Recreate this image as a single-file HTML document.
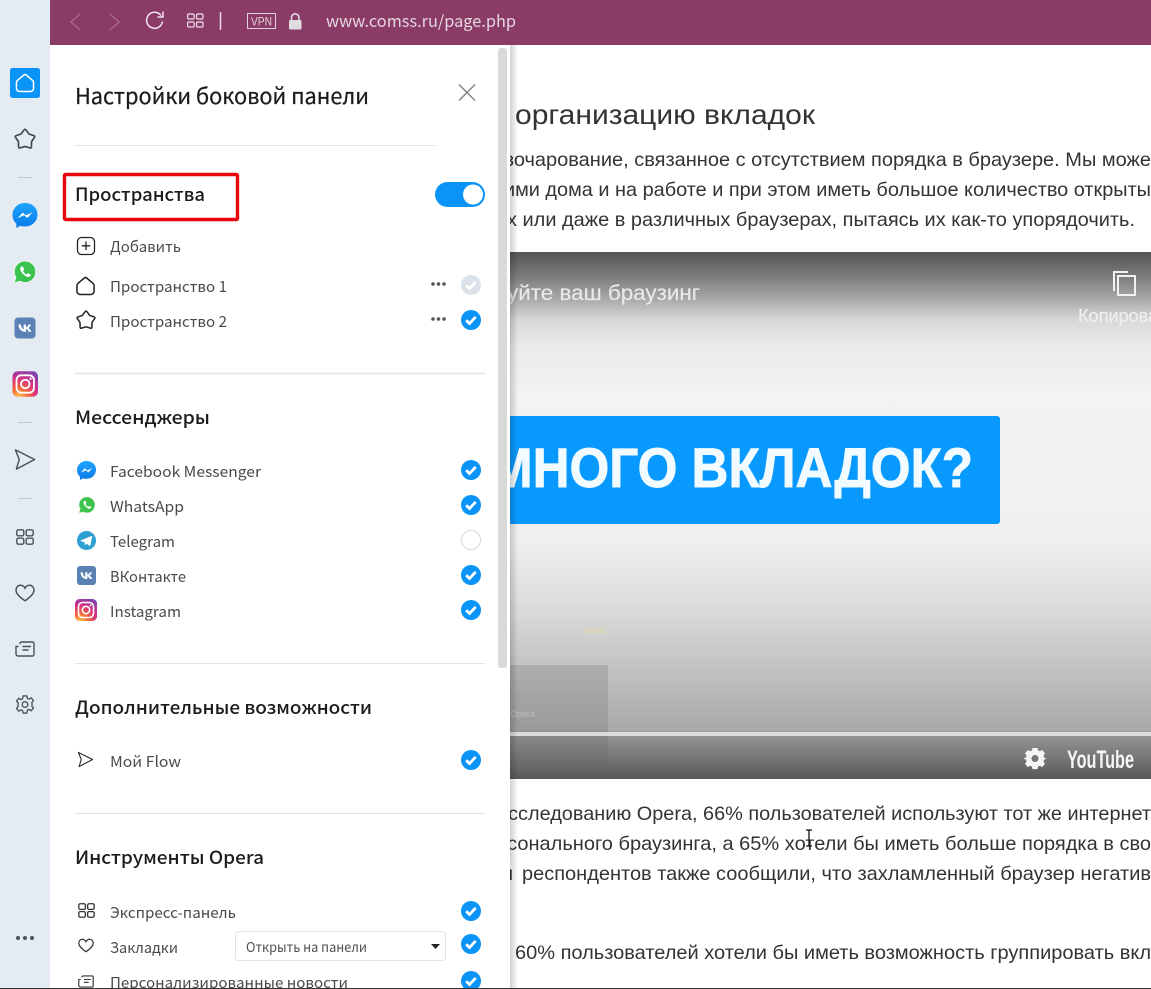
<!DOCTYPE html>
<html lang="ru"><head><meta charset="utf-8"><title>Настройки боковой панели</title>
<style>
html,body{margin:0;padding:0;background:#fff;width:1151px;height:989px;overflow:hidden}
svg{display:block}
.p{font-family:"Noto Sans CJK SC","Liberation Sans",sans-serif}
.h{font-size:18px;fill:#1c1c1c;font-weight:500}
.i{font-size:15px;fill:#4a4a4a}
.b{font-family:"Liberation Sans",sans-serif;font-size:19.5px;fill:#333}
</style></head><body>
<svg width="1151" height="989" viewBox="0 0 1151 989" xmlns="http://www.w3.org/2000/svg">
<defs>
<linearGradient id="vid" x1="0" y1="0" x2="0" y2="1">
<stop offset="0" stop-color="#555"/><stop offset=".05" stop-color="#7f7f7f"/><stop offset=".09" stop-color="#aaa"/><stop offset=".13" stop-color="#d8d8d8"/><stop offset=".18" stop-color="#ebebeb"/><stop offset=".27" stop-color="#f3f3f5"/><stop offset=".55" stop-color="#f0f0f0"/><stop offset=".66" stop-color="#dedede"/><stop offset=".75" stop-color="#cbcbcb"/><stop offset=".907" stop-color="#a9a9a9"/><stop offset=".915" stop-color="#979797"/><stop offset="1" stop-color="#585858"/>
</linearGradient>
<linearGradient id="sh" x1="0" y1="0" x2="1" y2="0"><stop offset="0" stop-color="#000" stop-opacity=".18"/><stop offset="1" stop-color="#000" stop-opacity="0"/></linearGradient>
<linearGradient id="fb" x1="0" y1="0" x2="0" y2="1"><stop offset="0" stop-color="#1fa5ff"/><stop offset="1" stop-color="#0a7be8"/></linearGradient>
<radialGradient id="ig" cx=".25" cy="1" r="1.2"><stop offset="0" stop-color="#fdc04e"/><stop offset=".3" stop-color="#f4663a"/><stop offset=".6" stop-color="#d42f87"/><stop offset="1" stop-color="#6a47b8"/></radialGradient>
<symbol id="ck" viewBox="0 0 20 20"><circle cx="10" cy="10" r="10" fill="#0b94f7"/><path d="M5.2 10.300l3.300 3.200 6.200-6.600" fill="none" stroke="#fff" stroke-width="2.800"/></symbol>
<symbol id="ckg" viewBox="0 0 20 20"><circle cx="10" cy="10" r="10" fill="#dbe2e9"/><path d="M5.2 10.300l3.300 3.200 6.200-6.600" fill="none" stroke="#fff" stroke-width="2.800"/></symbol>
<symbol id="msg" viewBox="0 0 24 24"><path d="M12 0C5.2 0 0 5 0 11.500c0 3.400 1.400 6.300 3.700 8.400V24l3.800-2.100c1.400.4 2.900.6 4.500.6 6.800 0 12-5 12-11.500S18.800 0 12 0z" fill="url(#fb)"/><path d="M4.800 14.600l5-5.400 3 2.600 6.400-2.800-5 5.400-3-2.600z" fill="#fff"/></symbol>
<symbol id="wa" viewBox="0 0 24 24"><path d="M12 1C6 1 1.200 5.800 1.200 11.700c0 2.100.6 4 1.600 5.700L1 23l5.800-1.700c1.500.8 3.300 1.300 5.200 1.300 6 0 10.800-4.800 10.800-10.800S18 1 12 1z" fill="#3cc34e" stroke="#eaf7ec" stroke-width="1"/><path d="M8.500 6.500c-.6.4-1.500 1.300-1.300 2.900.3 2.500 4.400 7 7.600 7.600 1.600.2 2.600-.8 2.900-1.500.2-.4-.1-.8-.4-1l-2-1.100c-.4-.2-.7 0-1 .3l-.6.7c-1.400-.3-3.100-2.100-3.600-3.700l.7-.7c.3-.3.3-.6.2-.9l-1-2.200c-.2-.5-1-.7-1.500-.4z" fill="#fff"/></symbol>
<symbol id="vk" viewBox="0 0 24 24"><rect width="24" height="24" rx="4" fill="#5a82b4"/><path transform="translate(1.500 0)" d="M3 8h2.900c.1 3.600 1.700 5.100 3 5.400V8h2.700v3.100c1.200-.1 2.500-1.500 3-3.100h2.700c-.4 2-2 3.500-3.100 4.100 1.100.5 2.900 1.800 3.600 4.300h-3c-.6-1.700-2-3.100-3.200-3.200v3.200h-.4C6.500 16.400 3.200 13.300 3 8z" fill="#fff"/></symbol>
<symbol id="ins" viewBox="0 0 24 24"><rect width="24" height="24" rx="5" fill="url(#ig)"/><rect x="3.800" y="3.800" width="16.400" height="16.400" rx="4.500" fill="none" stroke="#fff" stroke-width="1.700"/><circle cx="12" cy="12" r="4" fill="none" stroke="#fff" stroke-width="1.700"/><circle cx="17" cy="7" r="1.100" fill="#fff"/></symbol>
<symbol id="tg" viewBox="0 0 24 24"><circle cx="12" cy="12" r="12" fill="#2d9fd3"/><path d="M4.600 11.800l13.700-5.500c.6-.2 1.100.2.9.9l-2.300 11c-.2.7-.7.9-1.200.5l-3.500-2.600-1.800 1.700c-.3.3-.6.1-.6-.3l-.2-3.200-5-1.600c-.6-.2-.6-.6 0-.9z" fill="#fff"/></symbol>
<symbol id="home" viewBox="0 0 20 20"><path d="M8.600 1.700Q10 .6 11.400 1.700L18 7.300Q19 8.100 19 9.500V15.500a3.500 3.500 0 0 1-3.500 3.500H4.500A3.500 3.500 0 0 1 1 15.500V9.500Q1 8.100 2 7.300z" fill="none" stroke="currentColor" stroke-width="1.600" stroke-linejoin="round"/></symbol>
<symbol id="star" viewBox="0 0 22 22"><path d="M10.100 2.700Q11 1.500 11.900 2.700L14.700 6.400 19.050 7.900Q20.500 8.400 19.600 9.650L17 13.400 16.900 18.050Q16.900 19.600 15.400 19.150L11 17.800 6.600 19.150Q5.100 19.600 5.100 18.050L5 13.400 2.400 9.650Q1.500 8.400 2.950 7.900L7.300 6.400z" fill="none" stroke="currentColor" stroke-width="1.500" stroke-linejoin="round"/></symbol>
<symbol id="flow" viewBox="0 0 24 24"><path d="M2 2l20 10L3 22l3-10z" fill="none" stroke="currentColor" stroke-width="1.500" stroke-linejoin="round"/></symbol>
<symbol id="grid" viewBox="0 0 18 16"><g fill="none" stroke="currentColor" stroke-width="1.400"><rect x=".8" y=".8" width="7" height="6" rx="1.500"/><rect x="10.200" y=".8" width="7" height="6" rx="1.500"/><rect x=".8" y="9.200" width="7" height="6" rx="1.500"/><rect x="10.200" y="9.200" width="7" height="6" rx="1.500"/></g></symbol>
<symbol id="heart" viewBox="0 0 20 18"><path d="M10 16.800C4 12.500 1 9.500 1 6a4.600 4.600 0 0 1 9-1.500A4.600 4.600 0 0 1 19 6c0 3.500-3 6.500-9 10.800z" fill="none" stroke="currentColor" stroke-width="1.500" stroke-linejoin="round"/></symbol>
<symbol id="news" viewBox="0 0 20 16"><path d="M5 2.500A1.500 1.500 0 0 1 6.500 1H17.500A1.500 1.500 0 0 1 19 2.500V13.500A1.500 1.500 0 0 1 17.500 15H3A2 2 0 0 1 1 13V5.500H3M8 5.500H15.500M8 9H13" fill="none" stroke="currentColor" stroke-width="1.400" stroke-linecap="round"/></symbol>
<symbol id="gear" viewBox="0 0 20 20"><path d="M8 1h4l.5 2.600 1.800.8 2.200-1.500 2.500 3-1.800 1.900.3 2-.3 1.900 1.800 1.800-2.500 3.100-2.200-1.500-1.800.8L12 19H8l-.5-2.600-1.800-.8-2.200 1.500-2.500-3.100 1.800-1.800-.3-1.900.3-2L1 6.400l2.500-3 2.200 1.500 1.800-.8z" fill="none" stroke="currentColor" stroke-width="1.400" stroke-linejoin="round"/><circle cx="10" cy="10" r="3" fill="none" stroke="currentColor" stroke-width="1.400"/></symbol>
<clipPath id="vc"><rect x="510" y="252" width="641" height="527"/></clipPath>
</defs>

<rect width="1151" height="989" fill="#fff"/>

<!-- page content -->
<text x="515" y="124" font-family="Liberation Sans,sans-serif" font-size="27.5" fill="#333" textLength="300" lengthAdjust="spacingAndGlyphs">организацию вкладок</text>
<text class="b" x="494" y="166" textLength="657" lengthAdjust="spacingAndGlyphs">азочарование, связанное с отсутствием порядка в браузере. Мы може</text>
<text class="b" x="504" y="196" textLength="647" lengthAdjust="spacingAndGlyphs">ими дома и на работе и при этом иметь большое количество открыты</text>
<text class="b" x="507" y="226" textLength="628" lengthAdjust="spacingAndGlyphs">х или даже в различных браузерах, пытаясь их как-то упорядочить.</text>

<g clip-path="url(#vc)">
<rect x="510" y="252" width="641" height="527" fill="url(#vid)"/>
<rect x="500" y="416" width="500" height="108" rx="3" fill="#0899ff"/>
<text x="490" y="487" font-family="Liberation Sans,sans-serif" font-weight="700" font-size="56" fill="#f2fbff" stroke="#f2fbff" stroke-width=".9" textLength="483" lengthAdjust="spacingAndGlyphs">МНОГО ВКЛАДОК?</text>
<text x="497" y="300" font-family="Liberation Sans,sans-serif" font-size="21" fill="#e8e8e8" stroke="#e8e8e8" stroke-width=".2" textLength="203" lengthAdjust="spacingAndGlyphs">зуйте ваш браузинг</text>
<text x="1078" y="322" font-family="Liberation Sans,sans-serif" font-size="18" fill="#eee" stroke="#eee" stroke-width=".3" textLength="80" lengthAdjust="spacingAndGlyphs">Копирова</text>
<path d="M1114 291V272h14M1118 276h17v19h-17z" fill="none" stroke="#f2f2f2" stroke-width="2"/>
<rect x="500" y="665" width="108" height="99" fill="#666" fill-opacity=".22"/>
<rect x="584" y="628" width="22" height="6" fill="#e3dca0" fill-opacity=".35"/>
<text x="510" y="717" font-family="Liberation Sans,sans-serif" font-size="9" fill="#ddd" fill-opacity=".5">Opera</text>
<rect x="510" y="732" width="641" height="4" fill="#dcdcdc"/>
<path d="M1032.500 748h5l.6 2.500 1.900.8 2.200-1.300 2.800 3.400-1.500 2 .3 1.800 2.200 1.100v.4l-2.200 1.200-.3 1.800 1.500 2-2.800 3.400-2.200-1.300-1.900.8-.6 2.500h-5l-.6-2.500-1.900-.8-2.200 1.300-2.800-3.400 1.500-2-.3-1.800-2.200-1.200v-.4l2.200-1.100.3-1.800-1.500-2 2.800-3.400 2.200 1.300 1.900-.8zM1035 755a3.500 3.500 0 1 0 0 7 3.500 3.500 0 0 0 0-7z" fill="#f5f5f5" fill-rule="evenodd"/>
<text x="1067" y="768" font-family="Liberation Sans,sans-serif" font-weight="700" font-size="25" fill="#f5f5f5" textLength="67" lengthAdjust="spacingAndGlyphs">YouTube</text>
</g>

<text class="b" x="497" y="820" textLength="654" lengthAdjust="spacingAndGlyphs">исследованию Opera, 66% пользователей используют тот же интернет</text>
<text class="b" x="496" y="850" textLength="655" lengthAdjust="spacingAndGlyphs">рсонального браузинга, а 65% хотели бы иметь больше порядка в сво</text>
<text class="b" x="499" y="880">ы</text>
<text class="b" x="522" y="880" textLength="629" lengthAdjust="spacingAndGlyphs">респондентов также сообщили, что захламленный браузер негатив</text>
<text class="b" x="515" y="959" textLength="636" lengthAdjust="spacingAndGlyphs">60% пользователей хотели бы иметь возможность группировать вкл</text>
<path d="M806 830h6M809 830v16M806 846h6" stroke="#111" stroke-width="1.300" fill="none"/>
<rect x="0" y="988" width="1151" height="1" fill="#222"/>

<!-- panel shadow -->
<rect x="510" y="45" width="8" height="944" fill="url(#sh)"/>
<!-- toolbar -->
<rect x="50" y="0" width="1101" height="45" fill="#8a3c66"/>
<g fill="none" stroke-width="1.500">
<path d="M80 14l-9 8 9 8M110 14l9 8-9 8" stroke="#a5678a"/>
<path d="M161 15.500a8 8 0 1 0 1.500 6" stroke="#f2e6ec"/>
<path d="M163 11.500v5.500h-5.500" stroke="#f2e6ec"/>
<g stroke="#efe2e9" stroke-width="1.200"><rect x="187.600" y="14" width="6.500" height="5" rx="1.200"/><rect x="196.500" y="14" width="6.500" height="5" rx="1.200"/><rect x="187.600" y="22" width="6.500" height="5" rx="1.200"/><rect x="196.500" y="22" width="6.500" height="5" rx="1.200"/></g>
<path d="M220.500 12v18" stroke="#e8d8e1"/>
<rect x="247.500" y="13.500" width="28" height="15" stroke="#e3d0da" stroke-width="1"/>
<path d="M291.500 21v-3.500a3.700 3.700 0 0 1 7.400 0V21" stroke="#e0dde0" stroke-width="1.600"/>
</g>
<rect x="289" y="20" width="12.500" height="9.500" rx="1.500" fill="#e0dde0"/>
<text x="251" y="25.500" font-family="Liberation Sans,sans-serif" font-size="12" fill="#e3d0da" textLength="21" lengthAdjust="spacingAndGlyphs">VPN</text>
<text class="p" x="326" y="27" font-size="16.500" fill="#e6d6df" textLength="190" lengthAdjust="spacingAndGlyphs">www.comss.ru/page.php</text>

<!-- left rail -->
<rect x="0" y="0" width="50" height="988" fill="#e4ebf3"/>
<rect x="10" y="68" width="30" height="30" rx="2.500" fill="#0b94f7"/>
<use href="#home" x="15.500" y="73" width="19" height="20" color="#fff"/>
<use href="#star" x="13" y="127" width="24" height="24" color="#3f4650"/>
<path d="M18 177.500h15M18 422.500h15M18 498.500h15" stroke="#c3cad2"/>
<use href="#msg" x="12.500" y="202.500" width="25" height="26"/>
<use href="#wa" x="13" y="260" width="24" height="24"/>
<use href="#vk" x="14.500" y="317.500" width="21" height="21"/>
<use href="#ins" x="12.500" y="371" width="25.500" height="26"/>
<use href="#flow" x="13.500" y="448" width="23" height="23" color="#4a515a"/>
<use href="#grid" x="16" y="529" width="18" height="16" color="#4a515a"/>
<use href="#heart" x="15" y="584" width="20" height="18" color="#4a515a"/>
<use href="#news" x="15" y="641" width="20" height="16" color="#4a515a"/>
<use href="#gear" x="15.500" y="695" width="19" height="19" color="#4a515a"/>
<g fill="#4a515a"><circle cx="18" cy="938" r="2"/><circle cx="25" cy="938" r="2"/><circle cx="32" cy="938" r="2"/></g>

<!-- panel -->
<rect x="50" y="45" width="460" height="943" fill="#fff"/>
<rect x="498" y="48" width="9" height="620" rx="3" fill="#d9d9d9"/>
<g class="p">
<text x="75" y="104" font-size="22" fill="#1c1c1c" stroke="#1c1c1c" stroke-width=".25" textLength="294" lengthAdjust="spacingAndGlyphs">Настройки боковой панели</text>
<path d="M459 84.500l16 16M475 84.500l-16 16" stroke="#808080" stroke-width="1.400"/>
<path d="M75 145.500h360" stroke="#dee3e8"/>
<text class="h" x="75" y="201" textLength="130" lengthAdjust="spacingAndGlyphs">Пространства</text>
<rect x="64.500" y="174.500" width="173" height="45" rx="1" fill="none" stroke="#e8060e" stroke-width="3.400"/>
<rect x="435" y="182" width="50" height="25" rx="12.500" fill="#0b94f7"/>
<circle cx="473" cy="194.500" r="10" fill="#fff"/>

<rect x="77.500" y="237.500" width="17" height="17" rx="4" fill="none" stroke="#222" stroke-width="1.300"/>
<path d="M86 241.500v8.500M81.800 245.800h8.500" stroke="#222" stroke-width="1.300"/>
<text class="i" x="110" y="252" textLength="71" lengthAdjust="spacingAndGlyphs">Добавить</text>
<use href="#home" x="76" y="276" width="19" height="20" color="#222"/>
<text class="i" x="110" y="292" textLength="117" lengthAdjust="spacingAndGlyphs">Пространство 1</text>
<use href="#star" x="75" y="309" width="22" height="22" color="#222"/>
<text class="i" x="110" y="327" textLength="117" lengthAdjust="spacingAndGlyphs">Пространство 2</text>
<g fill="#555"><circle cx="433" cy="284" r="1.800"/><circle cx="438.500" cy="284" r="1.800"/><circle cx="444" cy="284" r="1.800"/><circle cx="433" cy="319" r="1.800"/><circle cx="438.500" cy="319" r="1.800"/><circle cx="444" cy="319" r="1.800"/></g>
<use href="#ckg" x="461" y="275" width="20" height="20"/>
<use href="#ck" x="461" y="310" width="20" height="20"/>
<path d="M75 373.500h410" stroke="#dee3e8" stroke-width="1.500"/>

<text class="h" x="75" y="424" textLength="135" lengthAdjust="spacingAndGlyphs">Мессенджеры</text>
<use href="#msg" x="77" y="461" width="19" height="19"/>
<use href="#wa" x="78" y="496" width="18" height="18"/>
<use href="#tg" x="77" y="531" width="19" height="19"/>
<use href="#vk" x="77" y="566" width="19" height="19"/>
<use href="#ins" x="75" y="599" width="22" height="22"/>
<text class="i" x="110" y="477" textLength="151" lengthAdjust="spacingAndGlyphs">Facebook Messenger</text>
<text class="i" x="110" y="512" textLength="74" lengthAdjust="spacingAndGlyphs">WhatsApp</text>
<text class="i" x="110" y="547" textLength="65" lengthAdjust="spacingAndGlyphs">Telegram</text>
<text class="i" x="110" y="582" textLength="76" lengthAdjust="spacingAndGlyphs">ВКонтакте</text>
<text class="i" x="110" y="617" textLength="71" lengthAdjust="spacingAndGlyphs">Instagram</text>
<use href="#ck" x="461" y="460" width="20" height="20"/>
<use href="#ck" x="461" y="495" width="20" height="20"/>
<circle cx="471" cy="540" r="9.500" fill="#fff" stroke="#d5d9de"/>
<use href="#ck" x="461" y="565" width="20" height="20"/>
<use href="#ck" x="461" y="600" width="20" height="20"/>
<path d="M75 663.500h410" stroke="#dee3e8"/>

<text class="h" x="75" y="714" textLength="297" lengthAdjust="spacingAndGlyphs">Дополнительные возможности</text>
<use href="#flow" x="77" y="751" width="17" height="17" color="#222"/>
<text class="i" x="110" y="767" textLength="71" lengthAdjust="spacingAndGlyphs">Мой Flow</text>
<use href="#ck" x="461" y="750" width="20" height="20"/>
<path d="M75 813.500h410" stroke="#dee3e8"/>

<text class="h" x="75" y="864" textLength="189" lengthAdjust="spacingAndGlyphs">Инструменты Opera</text>
<use href="#grid" x="78" y="903" width="17" height="15" color="#333"/>
<text class="i" x="110" y="918" textLength="126" lengthAdjust="spacingAndGlyphs">Экспресс-панель</text>
<use href="#ck" x="461" y="901" width="20" height="20"/>
<use href="#heart" x="78" y="938" width="16" height="15" color="#333"/>
<text class="i" x="110" y="953" textLength="68" lengthAdjust="spacingAndGlyphs">Закладки</text>
<rect x="235.500" y="931.500" width="210" height="29" rx="3" fill="#fff" stroke="#dee3e8"/>
<text x="246" y="952" font-size="13.500" fill="#4f4f4f" textLength="121" lengthAdjust="spacingAndGlyphs">Открыть на панели</text>
<path d="M431 944h9l-4.500 5z" fill="#222"/>
<use href="#ck" x="461" y="934" width="20" height="20"/>
<use href="#news" x="78" y="975" width="16" height="13" color="#333"/>
<text class="i" x="110" y="988" textLength="238" lengthAdjust="spacingAndGlyphs">Персонализированные новости</text>
<use href="#ck" x="461" y="971" width="20" height="20"/>
</g>
<rect x="0" y="988" width="1151" height="1" fill="#333"/>
</svg>
</body></html>
